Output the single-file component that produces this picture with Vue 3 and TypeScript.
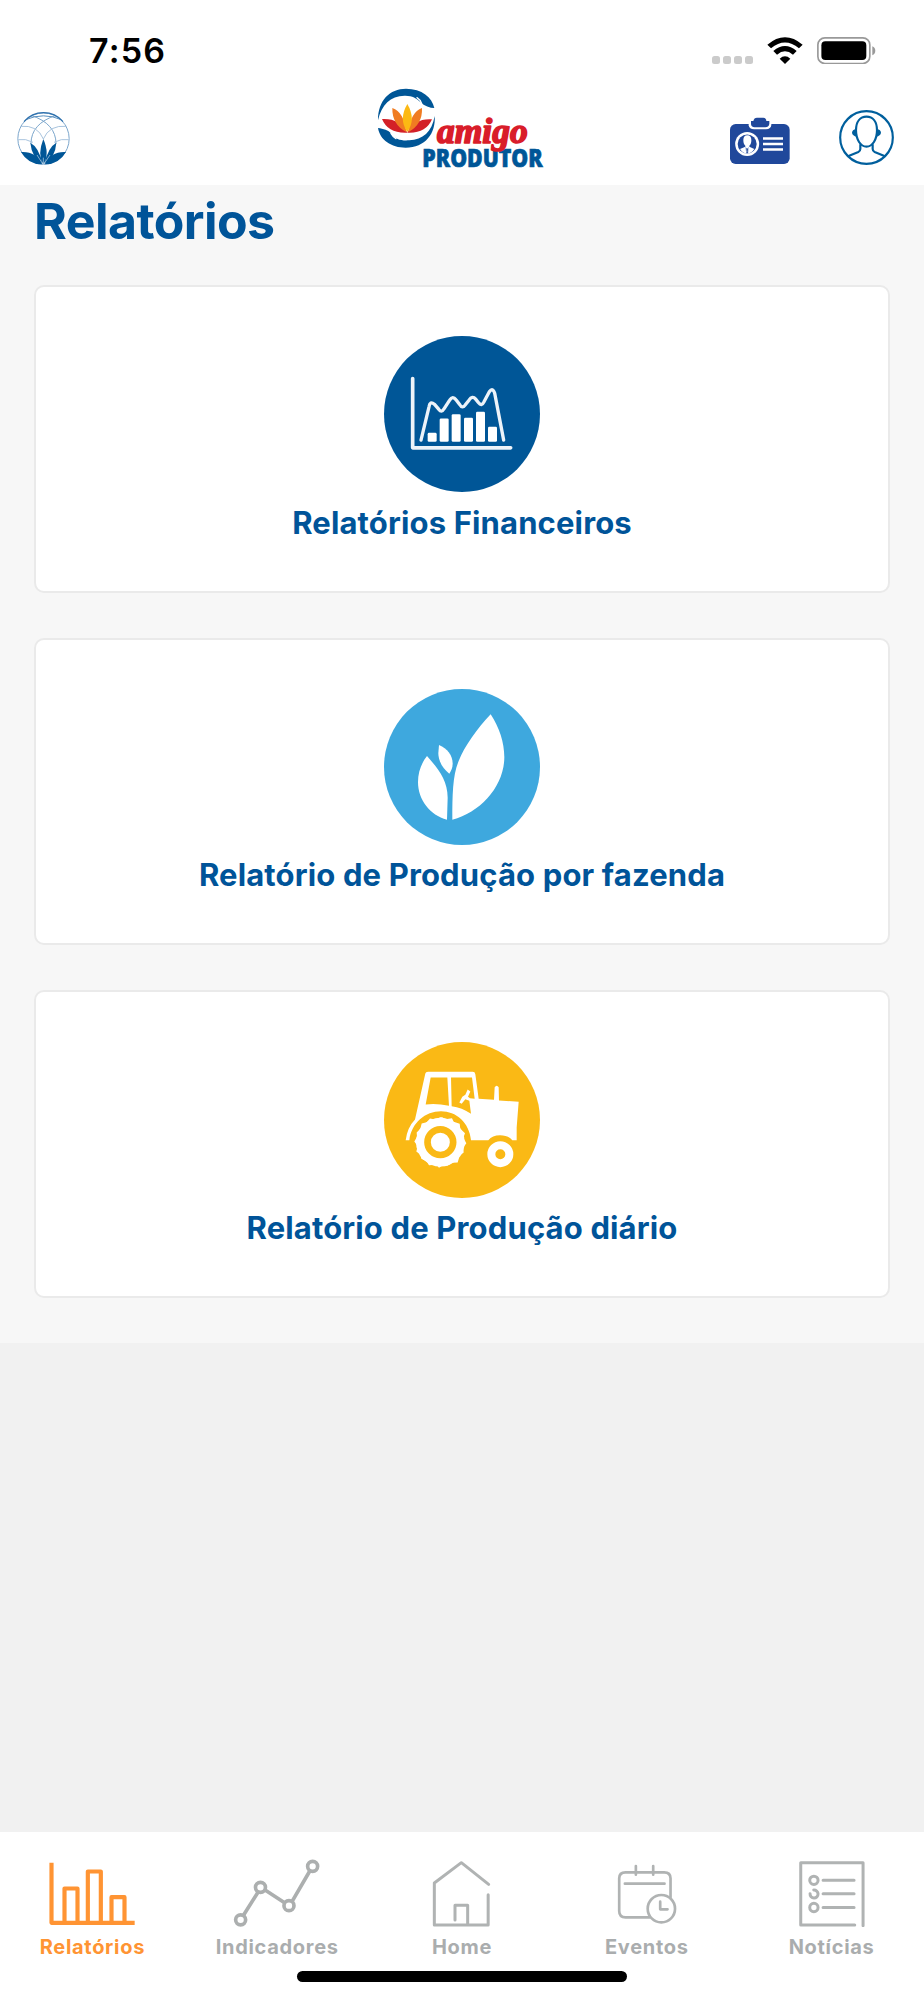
<script setup lang="ts">
interface Report {
  id: string
  label: string
}

interface Tab {
  id: string
  label: string
  viewBox: string
}

const reports: Report[] = [
  { id: 'finance', label: 'Relatórios Financeiros' },
  { id: 'farm', label: 'Relatório de Produção por fazenda' },
  { id: 'daily', label: 'Relatório de Produção diário' },
]

const tabs: Tab[] = [
  { id: 'reports', label: 'Relatórios', viewBox: '127 110 300 210' },
  { id: 'indicators', label: 'Indicadores', viewBox: '681.6 110 300 210' },
  { id: 'home', label: 'Home', viewBox: '156 110 300 210' },
  { id: 'events', label: 'Eventos', viewBox: '710.4 110 300 210' },
  { id: 'news', label: 'Notícias', viewBox: '244.8 110 300 210' },
]

const activeTab = 'reports'
</script>

<template>
  <div class="screen">
    <header class="header">
      <div class="status">
        <span class="time">7:56</span>
        <div class="signals">
          <span class="dots"><i v-for="n in 4" :key="n"></i></span>
          <svg class="wifi" viewBox="0 0 108 82">
            <path d="M1 23 Q54 -22 107 23 L96 34 Q54 -1 12 34 Z" />
            <path d="M19 42 Q54 12 89 42 L78 53 Q54 33 30 53 Z" />
            <path d="M38 65 Q54 50 70 65 L54 81 Z" />
          </svg>
          <svg class="battery" viewBox="0 0 176 82">
            <rect x="2.500" y="2.500" width="156" height="77" rx="21" fill="none" stroke="#999" stroke-width="5" />
            <rect x="13" y="13" width="135" height="56" rx="12" />
            <path d="M166 28 Q175 32 175 41 Q175 51 166 55 Z" fill="#999" />
          </svg>
        </div>
      </div>

      <nav class="topnav">
        <svg class="globe" viewBox="50 337 159 159">
          <g fill="none" stroke="#a9c4de" stroke-width="3">
            <circle cx="129.500" cy="417" r="77" stroke="#7ba6cc" />
            <path d="M92 347 Q167 372 167 432" stroke="#7ba6cc" />
            <path d="M167 347 Q92 372 92 432" stroke="#7ba6cc" />
            <path d="M76 360 Q129 337 183 360" stroke="#5b91c0" />
            <path d="M60 380 Q112 375 129 418 Q147 375 199 380" />
            <path d="M54 420 Q76 416 98 428 M205 420 Q183 416 161 428" />
          </g>
          <path d="M71 366 A77 77 0 0 1 188 366" fill="none" stroke="#2d70ad" stroke-width="4" />
          <g fill="#005697">
            <path d="M129 494 Q110 465 129 418 Q149 465 129 494" />
            <path d="M127 493 Q94 473 90 429 Q116 443 127 493" />
            <path d="M132 493 Q165 473 168 429 Q143 443 132 493" />
            <path d="M126 494 Q84 495 62 457 Q106 454 126 494" />
            <path d="M133 494 Q175 495 197 457 Q153 454 133 494" />
          </g>
          <path d="M129 494 V474 M128 494 L110 466 M130 494 L149 466" stroke="#c5d9ea" stroke-width="2" />
        </svg>

        <svg class="logo" viewBox="45 45 522 255">
          <g fill="#005697">
            <path d="M54 151 C54 91 89 56 138 56 C186 56 216 82 223 114 C210 114 193 108 181 96 C169 84 158 78 136 77 C92 76 65 103 54 151 Z" />
            <path d="M54 174 C70 177 85 179 94 192 C106 208 124 213 148 211 C188 209 216 186 224 138 C228 190 196 233 137 233 C94 233 60 210 54 174 Z" />
          </g>
          <path d="M171 83 Q181 89 185 101 M93 190 Q99 201 108 206" fill="none" stroke="#fff" stroke-width="4" stroke-linecap="round" />
          <path d="M142 188 Q84 191 66 147 Q119 144 142 188 Q165 144 216 148 Q198 191 142 188" fill="#d32027" />
          <path d="M139 186 Q96 164 97 114 Q132 126 139 186 M145 186 Q188 164 186 114 Q152 126 145 186" fill="#f07c22" />
          <path d="M142 186 Q115 148 142 102 Q169 148 142 186" fill="#fcb913" />
          <text class="logo-product" x="187" y="291.500" textLength="361" lengthAdjust="spacingAndGlyphs">PRODUTOR</text>
          <text class="logo-friend" x="231" y="220" textLength="272" lengthAdjust="spacingAndGlyphs">amigo</text>
        </svg>

        <div class="actions">
          <svg class="badge" viewBox="120 291 180 144">
            <rect x="120" y="312" width="179" height="120" rx="17" fill="#20489b" />
            <path d="M176 308 V316 Q178 328 192 328 H228 Q243 327 244 315 V308 Z" fill="#fff" />
            <path d="M190 303 Q192 293 201 293 H220 Q229 294 229 303 H238 V312 Q236 322 226 322 H194 Q183 321 183 312 V303 Z" fill="#20489b" />
            <circle cx="171.500" cy="372" r="36" fill="#fff" />
            <circle cx="171.500" cy="372" r="28.500" fill="#20489b" />
            <path d="M160 360 Q160 346 172 346 Q184 346 184 360 Q184 373 178 377 V380 L193 387 Q184 401 171.500 401 Q159 401 150 387 L166 380 V377 Q160 373 160 360" fill="#fff" />
            <path d="M166 381 L171.500 386 L177 381 L174 400 H169 Z" fill="#20489b" />
            <path d="M167 382 L169 397 M176 382 L174 397" stroke="#fff" stroke-width="2" />
            <path d="M219 355.500 H279 M219 372 H279 M219 388.500 H279" stroke="#fff" stroke-width="7" />
          </svg>
          <svg class="user" viewBox="447 270 165 165">
            <g fill="none" stroke="#005f9d" stroke-width="6.500">
              <circle cx="529.500" cy="352.500" r="79" />
              <path d="M498 331 C498 304 511 290 529.500 290 C548 290 561 304 561 331 C561 359 547 380 529.500 380 C512 380 498 359 498 331 Z" />
              <path d="M511 373 V387 Q511 393 505 396 L474 409 M548 373 V387 Q548 393 554 396 L585 409" />
            </g>
            <path d="M499 326 Q486 329 486 338 Q487 347 501 350 Z M560 326 Q573 329 573 338 Q572 347 558 350 Z" fill="#005f9d" />
          </svg>
        </div>
      </nav>
    </header>

    <main class="content">
      <h1>Relatórios</h1>
      <section v-for="report in reports" :key="report.id" class="card">
        <svg v-if="report.id === 'finance'" class="disc" viewBox="42 48.500 468 468">
          <circle cx="276" cy="282.500" r="234" fill="#005697" />
          <g fill="none" stroke="#edf3f9" stroke-width="11" stroke-linecap="round" stroke-linejoin="round">
            <path d="M128 176 V384 H422" />
            <path d="M153 361 L177 261 Q180 242 193 253 L206 268 Q215 280 222 267 L239 241 Q248 226 258 240 L269 254 Q277 268 286 255 L297 241 Q307 226 317 238 L325 248 Q335 261 342 246 L358 216 Q368 202 374 220 L401 361" stroke-width="10" />
          </g>
          <g fill="#fff">
            <rect x="173" y="339" width="27" height="27" rx="4" />
            <rect x="209" y="296" width="27" height="70" rx="4" />
            <rect x="245" y="283" width="27" height="83" rx="4" />
            <rect x="282" y="294" width="27" height="72" rx="4" />
            <rect x="318" y="276" width="27" height="90" rx="4" />
            <rect x="354" y="321" width="27" height="45" rx="4" />
          </g>
        </svg>
        <svg v-else-if="report.id === 'farm'" class="disc" viewBox="42 42 468 468">
          <circle cx="276" cy="276" r="234" fill="#3ea8de" />
          <g fill="#fff">
            <path d="M247 434 C247 360 248 300 266 258 C284 213 321 162 362 118 C388 158 403 202 403 246 C403 332 333 412 247 434 Z" />
            <path d="M231 434 C180 421 144 374 144 321 C144 292 154 264 171 243 C203 280 233 314 233 368 Z" />
            <path d="M207 210 C232 220 248 241 248 266 C248 277 244 286 238 296 C217 280 205 257 205 234 Z" />
          </g>
        </svg>
        <svg v-else class="disc" viewBox="42 35.500 468 468">
          <circle cx="276" cy="269.500" r="234" fill="#fab915" />
          <path d="M166 130 Q167 125 174 125 H308 Q315 125 316 132 L326 206 L372 209 L374 171 Q380 162 386 171 L387 211 L446 215 L440 292 L440 330 H427 Q414 315 390 315 Q367 315 355 330 H303 C298 276 258 243 213 243 C166 243 124 278 118 330 H107 Q112 292 135 268 Z" fill="#fff" />
          <path d="M182 142 H232 L237 227 Q200 219 167 223 Z M243 142 H306 L314 206 L300 204 L294 200 L301 184 L293 178 L286 194 L277 200 L268 217 L275 221 L286 207 L298 212 L303 251 Q276 232 245 228 Z" fill="#fab915" />
          <circle cx="211" cy="336" r="73" fill="#fff" />
          <path d="M211 261 L217 261 L226 267 L246 264 L251 275 L269 281 L271 296 L285 309 L280 323 L289 339 L280 352 L281 367 L269 377 L263 397 L247 398 L232 407 L218 406 L207 413 L199 404 L177 405 L170 394 L154 386 L151 373 L139 364 L143 348 L133 334 L141 320 L140 307 L151 296 L155 280 L170 276 L180 265 L196 268 Z" fill="#fff" />
          <circle cx="211" cy="336" r="38.500" fill="none" stroke="#fab915" stroke-width="20" />
          <circle cx="391" cy="372" r="27" fill="none" stroke="#fff" stroke-width="24" />
        </svg>
        <h2>{{ report.label }}</h2>
      </section>
    </main>

    <footer class="tabbar">
      <div class="tabs">
        <a v-for="tab in tabs" :key="tab.id" class="tab" :class="{ active: tab.id === activeTab }">
          <svg class="tab-icon" :class="tab.id" :viewBox="tab.viewBox">
            <template v-if="tab.id === 'reports'">
              <path d="M155.500 127 V307.500 H405" />
              <path d="M194.500 306 V204.500 H233.500 V306 M264.500 306 V153.500 H303.500 V306 M335.500 306 V230.500 H374.500 V306" />
            </template>
            <template v-else-if="tab.id === 'indicators'">
              <path d="M731 285 L775 215 M797 210 L852 246 M877 243 L930 152" />
              <circle cx="722.500" cy="298.500" r="15" />
              <circle cx="782" cy="201" r="15" />
              <circle cx="867.500" cy="256" r="15" />
              <circle cx="938.500" cy="138" r="15" />
            </template>
            <path v-else-if="tab.id === 'home'" d="M386 192 L304 127 L223 188 V314 H384.500 V223 M285 299 V255 H323 V312" />
            <template v-else-if="tab.id === 'events'">
              <path d="M931 231 V174 Q931 156 912 156 H796 Q777 156 777 174 V272 Q777 291 796 291 H869 M794 190 H913 M827 137 V163 M879 137 V163" />
              <circle cx="903.500" cy="265" r="41" />
              <path d="M900 244 V267 H922" />
            </template>
            <template v-else>
              <path d="M463 314 H301 V127 H488 V316 M368 180 H461 M368 220.500 H461 M368 261.500 H461" />
              <circle cx="340.500" cy="180" r="12.500" />
              <circle cx="340.500" cy="261.500" r="12.500" />
              <path d="M340 209 A12 12 0 1 1 329 220" />
            </template>
          </svg>
          <span>{{ tab.label }}</span>
        </a>
      </div>
      <div class="home-indicator"></div>
    </footer>
  </div>
</template>

<style>
body {
  margin: 0;
}
</style>

<style scoped>
.screen {
  display: flex;
  flex-direction: column;
  box-sizing: border-box;
  width: 924px;
  height: 2000px;
  background: #f1f1f1;
  font-family: Inter, "Liberation Sans", sans-serif;
}

svg {
  display: block;
  flex: none;
}

.header {
  height: 185px;
  background: #fff;
}

.status {
  display: flex;
  justify-content: space-between;
  box-sizing: border-box;
  height: 85px;
  padding: 30px 48px 0 89px;
}

.time {
  font-size: 34px;
  font-weight: 600;
  letter-spacing: 1.2px;
  line-height: 42px;
}

.signals {
  display: flex;
  align-items: flex-start;
  padding-top: 6.500px;
}

.dots {
  display: flex;
  gap: 3px;
  margin: 19.500px 14px 0 0;
}

.dots i {
  width: 8px;
  height: 8px;
  border-radius: 2.5px;
  background: #cbcbcb;
}

.wifi {
  width: 36px;
  height: 27.300px;
  margin-right: 14.500px;
}

.battery {
  width: 58.700px;
  height: 27.300px;
}

.topnav {
  display: grid;
  grid-template-columns: 1fr auto 1fr;
  align-items: start;
  padding: 0 30px 0 17px;
}

.globe {
  width: 53px;
  height: 53px;
  margin-top: 27px;
}

.logo {
  width: 174px;
  height: 85px;
  margin-left: 13px;
  overflow: visible;
}

.logo-product {
  fill: #005697;
  stroke: #005697;
  stroke-width: 2px;
  font-family: "Open Sans", sans-serif;
  font-size: 74px;
  font-weight: 800;
}

.logo-friend {
  fill: #d91d2a;
  stroke: #d91d2a;
  stroke-width: 5px;
  stroke-linejoin: round;
  font-family: "Liberation Serif", serif;
  font-size: 108px;
  font-style: italic;
  font-weight: 700;
}

.actions {
  display: flex;
  justify-content: flex-end;
  gap: 49px;
}

.badge {
  width: 60px;
  height: 48px;
  margin-top: 32px;
}

.user {
  width: 55px;
  height: 55px;
  margin-top: 25px;
}

.content {
  display: flex;
  flex-direction: column;
  gap: 45px;
  height: 1158px;
  box-sizing: border-box;
  padding: 5px 34px 45px;
  background: #f7f7f7;
}

h1 {
  height: 50px;
  margin: 0;
  color: #005499;
  font-size: 50px;
  font-weight: 700;
  letter-spacing: -0.55px;
  line-height: 62px;
}

.card {
  display: flex;
  flex: 1;
  flex-direction: column;
  align-items: center;
  box-sizing: border-box;
  padding-top: 49.400px;
  border: 2px solid #eaeaea;
  border-radius: 10px;
  background: #fff;
}

.disc {
  width: 156px;
  height: 156px;
}

h2 {
  margin: 10.400px 0 0;
  color: #005499;
  font-size: 31px;
  font-weight: 700;
  letter-spacing: 0.15px;
  line-height: 40px;
  white-space: nowrap;
}

.tabbar {
  display: flex;
  flex-direction: column;
  align-items: center;
  box-sizing: border-box;
  height: 168px;
  margin-top: auto;
  padding-top: 24.700px;
  background: #fff;
}

.tabs {
  display: grid;
  grid-template-columns: repeat(5, 1fr);
  width: 100%;
}

.tab {
  display: flex;
  flex-direction: column;
  align-items: center;
  color: #aaadae;
}

.tab.active {
  color: #ff9433;
}

.tab-icon {
  width: 100px;
  height: 70px;
  fill: none;
  stroke: #b0b3b3;
  stroke-width: 9px;
  stroke-linecap: round;
  stroke-linejoin: round;
}

.tab-icon.reports {
  stroke: #ff9433;
  stroke-width: 12.500px;
  stroke-linecap: butt;
}

.tab-icon.indicators {
  stroke: #acafaf;
  stroke-width: 11px;
  stroke-linecap: butt;
}

.tab-icon.events {
  stroke-width: 8px;
}

.tab span {
  margin-top: 8.300px;
  font-size: 20px;
  font-weight: 700;
  letter-spacing: 0.7px;
  line-height: 24px;
}

.home-indicator {
  width: 330px;
  height: 11px;
  margin-top: 11.700px;
  border-radius: 6px;
  background: #000;
}
</style>
